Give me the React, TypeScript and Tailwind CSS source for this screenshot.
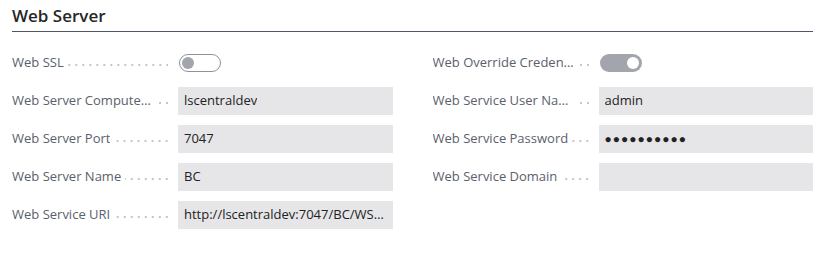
import type { ReactNode } from 'react';

type Field =
  | { label: string; kind: 'toggle'; on: boolean }
  | { label: string; kind: 'text'; value: string }
  | { label: string; kind: 'password'; value: string };

const left: Field[] = [
  { label: 'Web SSL', kind: 'toggle', on: false },
  { label: 'Web Server Computer Name', kind: 'text', value: 'lscentraldev' },
  { label: 'Web Server Port', kind: 'text', value: '7047' },
  { label: 'Web Server Name', kind: 'text', value: 'BC' },
  { label: 'Web Service URI', kind: 'text', value: 'http://lscentraldev:7047/BC/WS/CRONUS' },
];

const right: Field[] = [
  { label: 'Web Override Credentials', kind: 'toggle', on: true },
  { label: 'Web Service User Name', kind: 'text', value: 'admin' },
  { label: 'Web Service Password', kind: 'password', value: 'abcdefghij' },
  { label: 'Web Service Domain', kind: 'text', value: '' },
];

function Toggle({ on }: { on: boolean }) {
  return on ? (
    <div className="flex h-[18px] w-[42px] items-center justify-end rounded-full bg-[#a2a5ab] pr-[3px]">
      <span className="h-[12px] w-[12px] rounded-full bg-white" />
    </div>
  ) : (
    <div className="flex h-[18px] w-[42px] items-center rounded-full border border-[#8f9399] bg-white pl-[2px]">
      <span className="h-[12px] w-[12px] rounded-full bg-[#a2a5ab]" />
    </div>
  );
}

function Row({ label, children }: { label: string; children: ReactNode }) {
  return (
    <div className="flex h-[28px] items-center">
      <div className="flex w-[166px] shrink-0 items-center pr-[10px]">
        <span className="truncate text-[#5a616c]">{label}</span>
        <span className="ml-[4px] mt-[3px] h-[2px] min-w-[9px] flex-1 bg-[linear-gradient(to_left,#c4c6ca_2px,transparent_2px)] bg-[length:7px_2px] bg-right bg-repeat-x" />
      </div>
      {children}
    </div>
  );
}

function FieldRow({ field }: { field: Field }) {
  if (field.kind === 'toggle') {
    return (
      <Row label={field.label}>
        <div className="pl-[1px]">
          <Toggle on={field.on} />
        </div>
      </Row>
    );
  }
  return (
    <Row label={field.label}>
      <div className="flex h-[28px] min-w-0 flex-1 items-center bg-[#e6e6e8] px-[6px]">
        {field.kind === 'password' ? (
          <span className="text-[12px] tracking-[1px] text-[#222]">
            {'●'.repeat(field.value.length)}
          </span>
        ) : (
          <span className="truncate text-[#222]">{field.value}</span>
        )}
      </div>
    </Row>
  );
}

export default function App() {
  return (
    <div className="h-[261px] w-[826px] bg-white pl-3 pr-[13px] font-['Open_Sans',sans-serif] text-[13px]">
      <div className="h-[32px] border-b border-[#4d5566] pt-[4px]">
        <h2 className="text-[17px] leading-6 font-semibold text-[#262626]">Web Server</h2>
      </div>
      <div className="mt-[17px] grid grid-cols-2 gap-x-[40px]">
        <div className="flex flex-col gap-[10px]">
          {left.map((f) => (
            <FieldRow key={f.label} field={f} />
          ))}
        </div>
        <div className="flex flex-col gap-[10px]">
          {right.map((f) => (
            <FieldRow key={f.label} field={f} />
          ))}
        </div>
      </div>
    </div>
  );
}
